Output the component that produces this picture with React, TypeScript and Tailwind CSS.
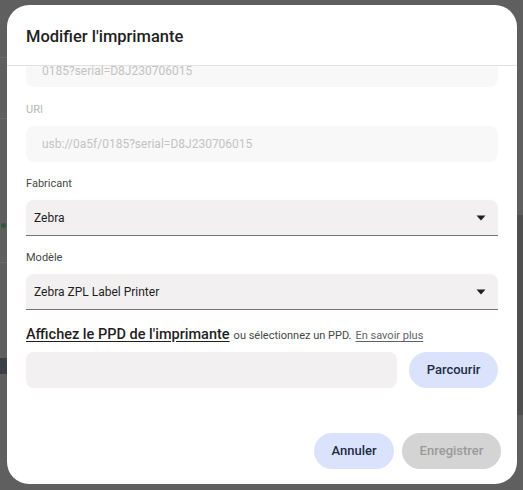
import React from "react";

function Caret() {
  return (
    <svg width="10" height="6" viewBox="0 0 10 6" className="shrink-0">
      <path d="M0.5 0.5 L9.5 0.5 L5 5.5 Z" fill="#1f1f1f" />
    </svg>
  );
}

function SelectField({ value }: { value: string }) {
  return (
    <div className="flex h-[36px] items-center justify-between rounded-t-[8px] border-b border-[#747474] bg-[#f2f0f1] pl-[8px] pr-[12px]">
      <span className="text-[12px] text-[#1f1f1f]">{value}</span>
      <Caret />
    </div>
  );
}

function Label({ children, muted }: { children: React.ReactNode; muted?: boolean }) {
  return (
    <div className={muted ? "text-[11px] leading-[14px] text-[#b5b5b5]" : "text-[11px] leading-[14px] text-[#444746]"}>
      {children}
    </div>
  );
}

export default function App() {
  return (
    <div
      className="relative h-[490px] w-[523px] overflow-hidden bg-[#5f5f5f] pl-[7px] pt-[5px]"
      style={{ fontFamily: "Roboto, 'Noto Sans', sans-serif" }}
    >
      {/* dimmed page underneath the dialog */}
      <div className="pointer-events-none absolute inset-0 flex justify-between">
        <div className="flex w-[7px] flex-col pt-[57px]">
          <div className="h-px bg-[#6a6a6a]" />
          <div className="mt-[60px] h-px bg-[#6a6a6a]" />
          <div className="ml-[1px] mt-[104px] h-[5px] w-[5px] rounded-full bg-[#2f5a3a]" />
          <div className="mt-[34px] h-px bg-[#6a6a6a]" />
          <div className="mt-[95px] h-[16px] bg-[#3a3f48]" />
        </div>
        <div className="mt-[215px] h-[200px] w-[15px] bg-[#4f4f4f]" />
      </div>

      <div className="relative flex h-[479px] w-[510px] flex-col overflow-hidden rounded-[22px] bg-white">
        <div className="h-[61px] shrink-0 border-b border-[#e1e1e1] pl-[19px] pt-[21px]">
          <h1 className="text-[16.5px] font-medium leading-[22px] text-[#1f1f1f]">
            Modifier l'imprimante
          </h1>
        </div>

        <div className="flex-1 overflow-hidden px-[19px]">
          <div className="-mt-[15px] flex h-[36px] items-center rounded-[8px] bg-[#f8f8f8] pl-[16px] pt-[4px]">
            <span className="text-[12px] leading-[14px] text-[#c3c3c3]">0185?serial=D8J230706015</span>
          </div>

          <div className="mt-[16px]">
            <Label muted>URI</Label>
          </div>
          <div className="mt-[9px] flex h-[36px] items-center rounded-[8px] bg-[#f8f8f8] pl-[16px]">
            <span className="text-[12px] text-[#c3c3c3]">usb://0a5f/0185?serial=D8J230706015</span>
          </div>

          <div className="mt-[15px]">
            <Label>Fabricant</Label>
          </div>
          <div className="mt-[9px]">
            <SelectField value="Zebra" />
          </div>

          <div className="mt-[15px]">
            <Label>Modèle</Label>
          </div>
          <div className="mt-[9px]">
            <SelectField value="Zebra ZPL Label Printer" />
          </div>

          <div className="mt-[14px] flex h-[18px] items-baseline whitespace-nowrap">
            <span className="text-[14.5px] font-medium text-[#1f1f1f] underline underline-offset-2">
              Affichez le PPD de l'imprimante
            </span>
            <span className="ml-[4px] text-[11px] text-[#444746]">ou sélectionnez un PPD.</span>
            <span className="ml-[4px] text-[11px] text-[#5f6368] underline underline-offset-2">
              En savoir plus
            </span>
          </div>

          <div className="mt-[10px] flex h-[36px] gap-[12px]">
            <div className="flex-1 rounded-[8px] bg-[#f2f0f1]" />
            <button className="h-[36px] w-[89px] rounded-full bg-[#dae3fb] text-[13px] font-medium text-[#1e2b47]">
              Parcourir
            </button>
          </div>
        </div>

        <div className="flex shrink-0 justify-end gap-[8px] pb-[15px] pr-[16px]">
          <button className="h-[36px] w-[80px] rounded-full bg-[#dae3fb] text-[13px] font-medium text-[#1e2b47]">
            Annuler
          </button>
          <button className="h-[36px] w-[99px] rounded-full bg-[#d4d4d4] text-[13px] font-medium text-[#9b9b9b]">
            Enregistrer
          </button>
        </div>
      </div>
    </div>
  );
}
